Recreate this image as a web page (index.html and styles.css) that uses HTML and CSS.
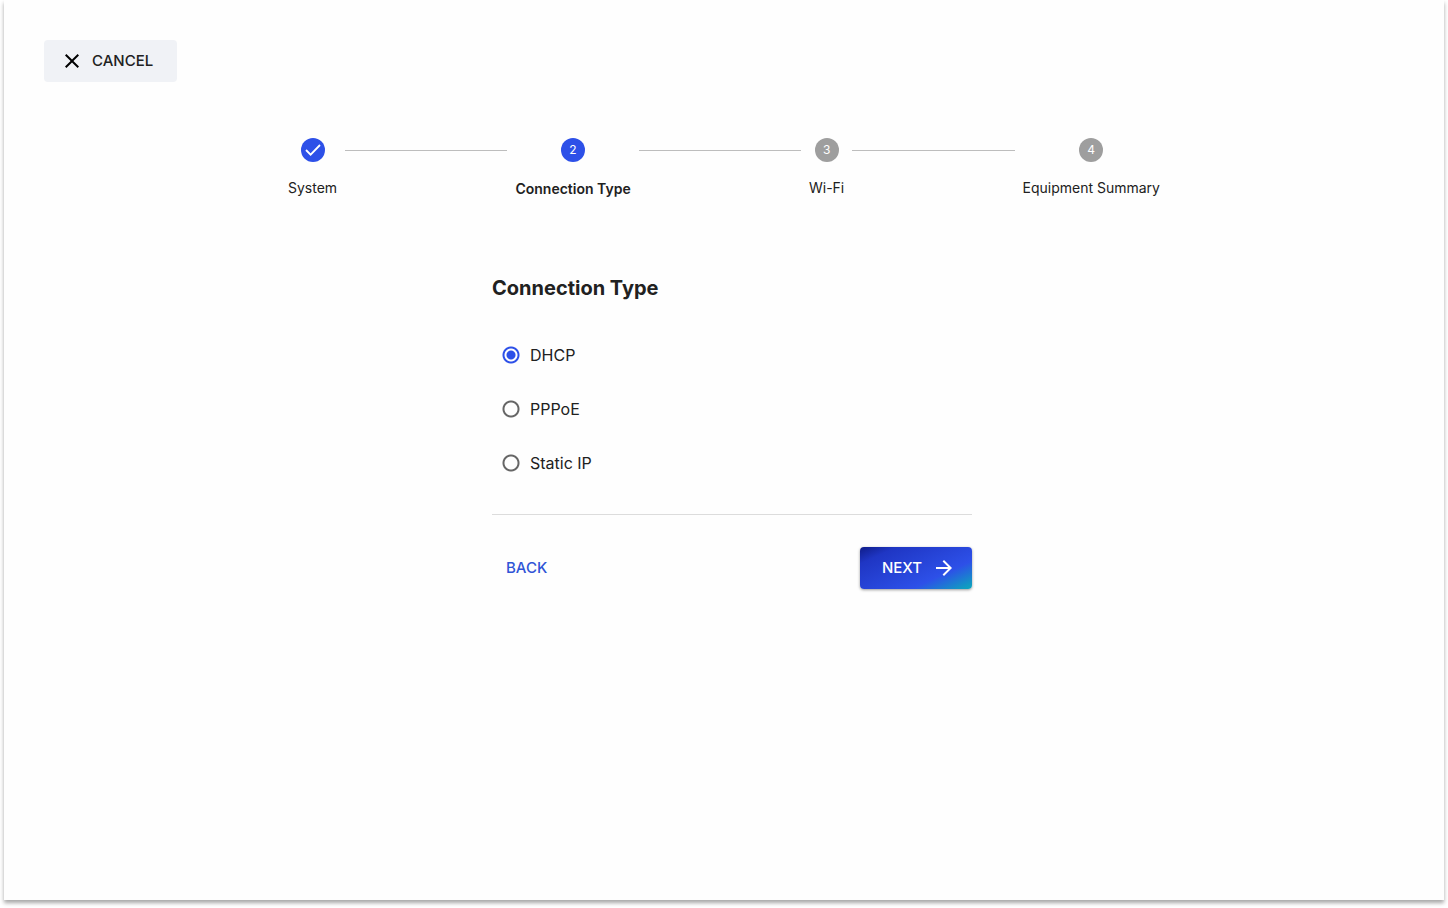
FILE: index.html
```html
<!DOCTYPE html>
<html lang="en">
<head>
    <meta charset="UTF-8">
    <meta name="viewport" content="width=device-width, initial-scale=1.0">
    <title>Connection Type</title>
    <link rel="stylesheet" href="styles.css">
</head>
<body>
    <main class="card">
        <button type="button" class="btn cancel">
            <svg class="icon" viewBox="0 0 24 24" aria-hidden="true"><path d="M19 6.41 17.59 5 12 10.59 6.41 5 5 6.41 10.59 12 5 17.59 6.41 19 12 13.41 17.59 19 19 17.59 13.41 12z"/></svg>
            CANCEL
        </button>

        <ol class="stepper">
            <li class="step">
                <span class="circle done">
                    <svg viewBox="0 0 24 24" aria-hidden="true"><path d="M5 12 9.6 16.6 19 7"/></svg>
                </span>
                <span class="label">System</span>
            </li>
            <li class="line" aria-hidden="true"></li>
            <li class="step active" aria-current="step">
                <span class="circle">2</span>
                <span class="label">Connection Type</span>
            </li>
            <li class="line" aria-hidden="true"></li>
            <li class="step">
                <span class="circle">3</span>
                <span class="label">Wi-Fi</span>
            </li>
            <li class="line" aria-hidden="true"></li>
            <li class="step">
                <span class="circle">4</span>
                <span class="label">Equipment Summary</span>
            </li>
        </ol>

        <form class="form">
            <h1 id="form-title">Connection Type</h1>
            <div class="options" role="radiogroup" aria-labelledby="form-title">
                <label class="option"><input type="radio" name="type" value="dhcp" checked>DHCP</label>
                <label class="option"><input type="radio" name="type" value="pppoe">PPPoE</label>
                <label class="option"><input type="radio" name="type" value="static">Static IP</label>
            </div>
            <div class="actions">
                <button type="button" class="btn back">BACK</button>
                <button type="button" class="btn next">
                    NEXT
                    <svg class="icon" viewBox="0 0 24 24" aria-hidden="true"><path d="m12 4-1.41 1.41L16.17 11H4v2h12.17l-5.58 5.59L12 20l8-8z"/></svg>
                </button>
            </div>
        </form>
    </main>
</body>
</html>
```
FILE: styles.css
```css
* {
    box-sizing: border-box;
}

body {
    display: flex;
    min-height: 100vh;
    margin: 0;
    padding: 0 4px 8px;
    background-color: #fff;
    color: #212121;
    font-family: Inter, "Liberation Sans", sans-serif;
    font-size: 16px;
    line-height: 24px;
}

.card {
    flex: 1;
    padding: 40px;
    background-color: #fefefe;
    box-shadow: 0 3px 4px rgba(0, 0, 0, 0.35);
}

.btn {
    display: inline-flex;
    align-items: center;
    height: 42px;
    border: none;
    border-radius: 4px;
    font-family: inherit;
    font-size: 15px;
    font-weight: 500;
    line-height: 24px;
    cursor: pointer;
}

.icon {
    width: 24px;
    height: 24px;
    fill: currentColor;
}

.cancel {
    gap: 8px;
    padding: 0 24px 0 16px;
    background-color: #f0f2f6;
    color: #212121;
}

.cancel .icon {
    fill: #000;
}

.stepper {
    display: flex;
    gap: 8px;
    max-width: 872px;
    margin: 56px auto 0;
    padding: 0;
    list-style: none;
}

.step {
    display: flex;
    flex-direction: column;
    align-items: center;
    gap: 16px;
    font-size: 14px;
    line-height: 20px;
    white-space: nowrap;
}

.line {
    flex: 1;
    height: 1px;
    margin-top: 12px;
    background-color: #bdbdbd;
}

.circle {
    display: flex;
    align-items: center;
    justify-content: center;
    width: 24px;
    height: 24px;
    border-radius: 50%;
    background-color: #9e9e9e;
    color: #fff;
    font-size: 12px;
}

.circle svg {
    width: 24px;
    height: 24px;
    fill: none;
    stroke: #fff;
    stroke-width: 1.8;
}

.circle.done,
.active .circle {
    background-color: #2d50e8;
}

.active .label {
    font-weight: 600;
    line-height: 22px;
}

.form {
    max-width: 496px;
    margin: 74px auto 0;
    padding-left: 16px;
}

h1 {
    margin: 0;
    font-size: 20px;
    line-height: 28px;
    font-weight: 700;
}

.options {
    display: flex;
    flex-direction: column;
    align-items: flex-start;
    gap: 16px;
    padding: 34px 0 32px;
    border-bottom: 1px solid #dcdcdc;
}

.option {
    display: flex;
    align-items: center;
    height: 38px;
    cursor: pointer;
}

/* ring and dot are painted as one background */
.option input {
    appearance: none;
    width: 20px;
    height: 20px;
    margin: 9px;
    background: radial-gradient(circle, transparent 6px, #666 7px, #666 8px, transparent 9px);
    cursor: pointer;
}

.option input:checked {
    background: radial-gradient(circle, #2d50e8 4px, transparent 5px, transparent 6px, #2d50e8 7px, #2d50e8 8px, transparent 9px);
}

.actions {
    display: flex;
    justify-content: space-between;
    margin-top: 32px;
}

.back {
    padding: 0 14px;
    background: none;
    color: #2f54d6;
}

.next {
    gap: 10px;
    padding: 0 16px 0 22px;
    background: linear-gradient(155deg, #0f1c88 0%, #1f36c4 18%, #2d50e8 70%, #0f9fc0 96%);
    box-shadow: 0 1px 3px rgba(0, 0, 0, 0.4);
    color: #fff;
}
```
